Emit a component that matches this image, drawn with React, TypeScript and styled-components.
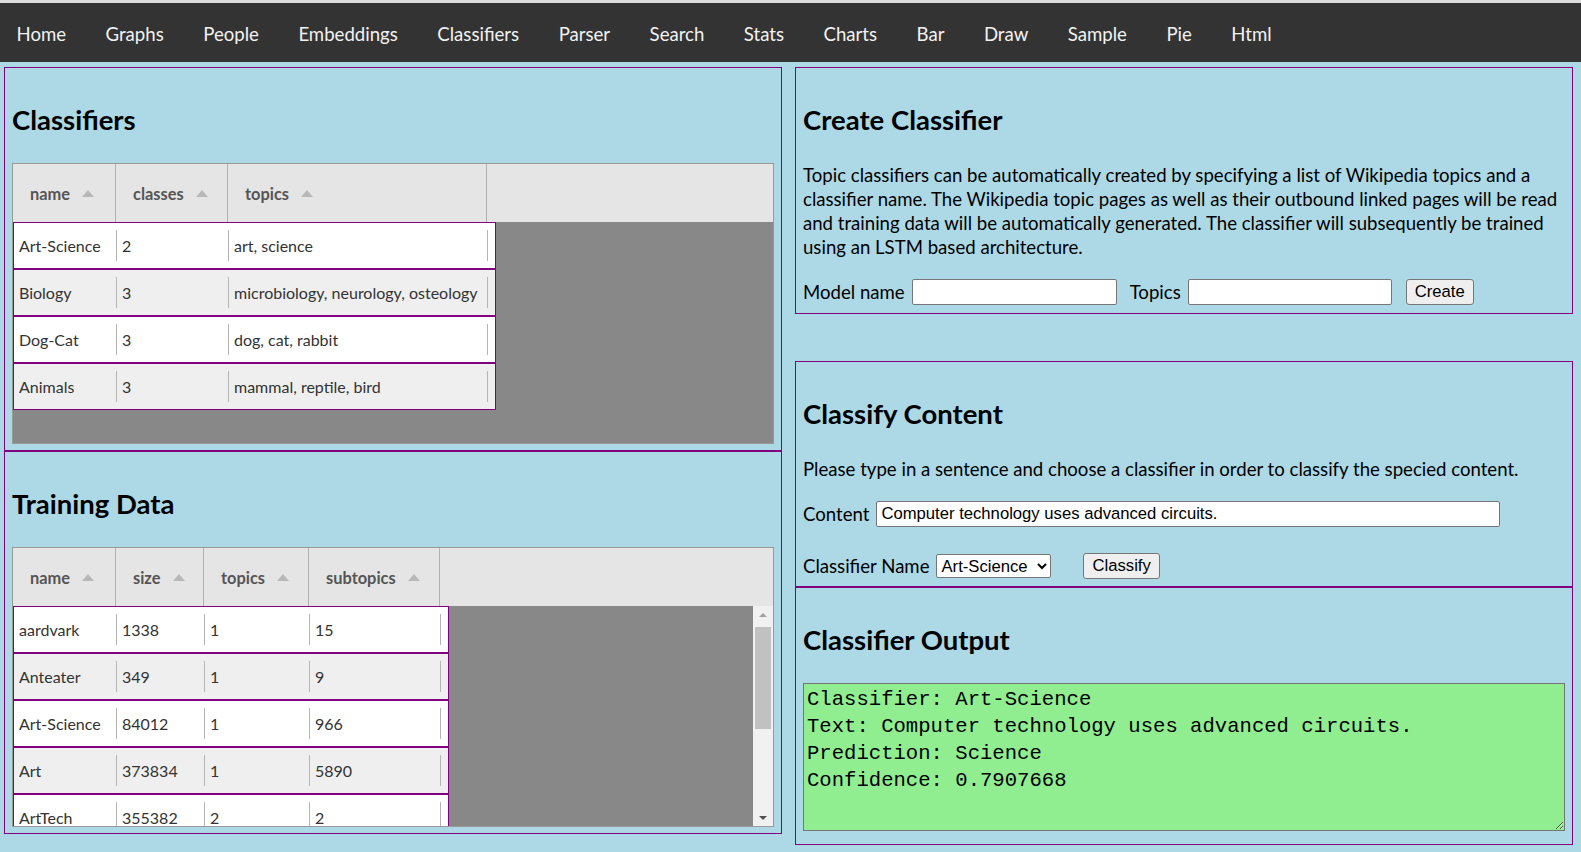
import React from "react";
import styled, { createGlobalStyle } from "styled-components";

const GlobalStyle = createGlobalStyle`
  html, body { margin: 0; padding: 0; }
  body {
    background: #add8e6;
    font-family: Lato, "Open Sans", sans-serif;
    color: #000;
    overflow: hidden;
  }
`;

const NavBar = styled.nav`
  box-sizing: border-box;
  display: flex;
  align-items: center;
  gap: 39.5px;
  height: 62px;
  padding: 2px 0 0 16.5px;
  background: #333;
  border-top: 3px solid #dcdcdc;
`;

const NavLink = styled.a`
  color: #f2f2f2;
  font-size: 18.6px;
  line-height: 24px;
  text-decoration: none;
`;

const Main = styled.main`
  display: grid;
  grid-template-columns: 778px 778px;
  column-gap: 13px;
  padding: 5px 0 0 4px;
  align-items: start;
`;

const Column = styled.div`
  display: flex;
  flex-direction: column;
`;

const Panel = styled.section<{ $pb: number; $mt?: number }>`
  border: 1px solid #800080;
  padding: 10px 7px ${(p) => p.$pb}px;
  margin-top: ${(p) => p.$mt ?? 0}px;
`;

const Title = styled.h2`
  font-size: 27.5px;
  font-weight: 700;
  line-height: 36px;
  margin: 24px 0 25px;
`;

const Text = styled.p`
  font-size: 18.6px;
  line-height: 24px;
  margin: 0 0 20px;
`;

const Grid = styled.div<{ $h: number }>`
  box-sizing: border-box;
  height: ${(p) => p.$h}px;
  border: 1px solid #999;
  background: #888;
  display: flex;
  flex-direction: column;
`;

const HeaderRow = styled.div`
  display: flex;
  height: 58px;
  flex-shrink: 0;
  background: #e5e5e5;
`;

const HeaderCell = styled.div<{ $w: number }>`
  box-sizing: border-box;
  width: ${(p) => p.$w}px;
  border-right: 1px solid #b0b0b0;
  display: flex;
  align-items: center;
  gap: 12px;
  padding-left: 17px;
  font-size: 16.4px;
  font-weight: 700;
  color: #555;
`;

const SortArrow = styled.span`
  width: 0;
  height: 0;
  border-left: 6.5px solid transparent;
  border-right: 6.5px solid transparent;
  border-bottom: 7px solid #b8b8b8;
`;

const GridBody = styled.div`
  flex: 1;
  min-height: 0;
  display: flex;
`;

const RowsViewport = styled.div`
  flex: 1;
  overflow: hidden;
  display: flex;
  flex-direction: column;
  align-items: flex-start;
`;

const DataRow = styled.div<{ $alt: boolean }>`
  box-sizing: border-box;
  display: flex;
  flex-shrink: 0;
  height: 47px;
  padding-right: 7px;
  border: 1px solid #800080;
  background: ${(p) => (p.$alt ? "#efefef" : "#fff")};
`;

const Cell = styled.div<{ $w: number }>`
  box-sizing: border-box;
  width: ${(p) => p.$w}px;
  padding: 7px 0;
  display: flex;
`;

const CellInner = styled.div`
  flex: 1;
  display: flex;
  align-items: center;
  padding-left: 5px;
  border-right: 1px solid #b5b5b5;
  font-size: 16px;
  color: #333;
  white-space: nowrap;
  overflow: hidden;
`;

const ScrollBar = styled.div`
  width: 20px;
  flex-shrink: 0;
  background: #f1f1f1;
  display: flex;
  flex-direction: column;
`;

const ScrollButton = styled.div`
  height: 17px;
  display: flex;
  align-items: center;
  justify-content: center;
  flex-shrink: 0;
`;

const ArrowUp = styled.span`
  width: 0;
  height: 0;
  border-left: 4px solid transparent;
  border-right: 4px solid transparent;
  border-bottom: 4px solid #a3a3a3;
`;

const ArrowDown = styled.span`
  width: 0;
  height: 0;
  border-left: 4px solid transparent;
  border-right: 4px solid transparent;
  border-top: 4px solid #505050;
`;

const ScrollTrack = styled.div`
  flex: 1;
  padding: 4px 2px 0;
`;

const ScrollThumb = styled.div`
  height: 102px;
  background: #c1c1c1;
`;

const FormRow = styled.div<{ $mt?: number }>`
  display: flex;
  align-items: center;
  height: 26px;
  margin-top: ${(p) => p.$mt ?? 0}px;
`;

const Label = styled.label<{ $ml?: number; $mr?: number }>`
  font-size: 18.6px;
  line-height: 24px;
  margin-left: ${(p) => p.$ml ?? 0}px;
  margin-right: ${(p) => p.$mr ?? 7}px;
  white-space: nowrap;
`;

const TextInput = styled.input<{ $w: number }>`
  box-sizing: border-box;
  width: ${(p) => p.$w}px;
  height: 26px;
  padding: 1px 4px;
  border: 1px solid #767676;
  border-radius: 2px;
  background: #fff;
  font-family: "Liberation Sans", Arial, sans-serif;
  font-size: 16.67px;
  color: #000;
`;

const Button = styled.button<{ $ml?: number }>`
  box-sizing: border-box;
  height: 26.5px;
  margin-left: ${(p) => p.$ml ?? 0}px;
  padding: 0 8px;
  border: 1px solid #767676;
  border-radius: 3px;
  background: #efefef;
  font-family: "Liberation Sans", Arial, sans-serif;
  font-size: 16.67px;
  color: #000;
`;

const Select = styled.select`
  box-sizing: border-box;
  width: 115px;
  height: 24px;
  border: 1px solid #767676;
  border-radius: 2px;
  background: #fff;
  font-family: "Liberation Sans", Arial, sans-serif;
  font-size: 16.67px;
  color: #000;
`;

const Output = styled.textarea`
  display: block;
  box-sizing: border-box;
  width: 100%;
  height: 148px;
  padding: 2px 3px 2px;
  border: 1px solid #767676;
  background: #90ee90;
  font-family: "Liberation Mono", "DejaVu Sans Mono", monospace;
  font-size: 20.6px;
  line-height: 27px;
  color: #000;
  resize: both;
`;

const navItems = [
  "Home",
  "Graphs",
  "People",
  "Embeddings",
  "Classifiers",
  "Parser",
  "Search",
  "Stats",
  "Charts",
  "Bar",
  "Draw",
  "Sample",
  "Pie",
  "Html",
];

type Col = { title: string; w: number };

function DataGrid({
  height,
  columns,
  rows,
  scroll,
}: {
  height: number;
  columns: Col[];
  rows: string[][];
  scroll?: boolean;
}) {
  return (
    <Grid $h={height}>
      <HeaderRow>
        {columns.map((c) => (
          <HeaderCell key={c.title} $w={c.w}>
            {c.title}
            <SortArrow />
          </HeaderCell>
        ))}
      </HeaderRow>
      <GridBody>
        <RowsViewport>
          {rows.map((r, i) => (
            <DataRow key={i} $alt={i % 2 === 1}>
              {r.map((v, j) => (
                <Cell key={j} $w={columns[j].w}>
                  <CellInner>{v}</CellInner>
                </Cell>
              ))}
            </DataRow>
          ))}
        </RowsViewport>
        {scroll && (
          <ScrollBar>
            <ScrollButton>
              <ArrowUp />
            </ScrollButton>
            <ScrollTrack>
              <ScrollThumb />
            </ScrollTrack>
            <ScrollButton>
              <ArrowDown />
            </ScrollButton>
          </ScrollBar>
        )}
      </GridBody>
    </Grid>
  );
}

const classifierCols: Col[] = [
  { title: "name", w: 103 },
  { title: "classes", w: 112 },
  { title: "topics", w: 259 },
];

const classifierRows = [
  ["Art-Science", "2", "art, science"],
  ["Biology", "3", "microbiology, neurology, osteology"],
  ["Dog-Cat", "3", "dog, cat, rabbit"],
  ["Animals", "3", "mammal, reptile, bird"],
];

const trainingCols: Col[] = [
  { title: "name", w: 103 },
  { title: "size", w: 88 },
  { title: "topics", w: 105 },
  { title: "subtopics", w: 131 },
];

const trainingRows = [
  ["aardvark", "1338", "1", "15"],
  ["Anteater", "349", "1", "9"],
  ["Art-Science", "84012", "1", "966"],
  ["Art", "373834", "1", "5890"],
  ["ArtTech", "355382", "2", "2"],
];

const outputText = `Classifier: Art-Science
Text: Computer technology uses advanced circuits.
Prediction: Science
Confidence: 0.7907668`;

export default function App() {
  return (
    <>
      <GlobalStyle />
      <NavBar>
        {navItems.map((n) => (
          <NavLink key={n} href="#">
            {n}
          </NavLink>
        ))}
      </NavBar>
      <Main>
        <Column>
          <Panel $pb={6}>
            <Title>Classifiers</Title>
            <DataGrid height={281} columns={classifierCols} rows={classifierRows} />
          </Panel>
          <Panel $pb={6}>
            <Title>Training Data</Title>
            <DataGrid height={280} columns={trainingCols} rows={trainingRows} scroll />
          </Panel>
        </Column>
        <Column>
          <Panel $pb={8}>
            <Title>Create Classifier</Title>
            <Text>
              Topic classifiers can be automatically created by specifying a list of Wikipedia topics
              and a classifier name. The Wikipedia topic pages as well as their outbound linked pages
              will be read and training data will be automatically generated. The classifier will
              subsequently be trained using an LSTM based architecture.
            </Text>
            <FormRow>
              <Label>Model name</Label>
              <TextInput $w={205} />
              <Label $ml={13}>Topics</Label>
              <TextInput $w={204} />
              <Button $ml={14}>Create</Button>
            </FormRow>
          </Panel>
          <Panel $pb={7} $mt={47}>
            <Title>Classify Content</Title>
            <Text>
              Please type in a sentence and choose a classifier in order to classify the specied
              content.
            </Text>
            <FormRow>
              <Label $mr={7}>Content</Label>
              <TextInput $w={624} defaultValue="Computer technology uses advanced circuits." />
            </FormRow>
            <FormRow $mt={26}>
              <Label $mr={7}>Classifier Name</Label>
              <Select defaultValue="Art-Science">
                <option>Art-Science</option>
                <option>Biology</option>
                <option>Dog-Cat</option>
                <option>Animals</option>
              </Select>
              <Button $ml={32}>Classify</Button>
            </FormRow>
          </Panel>
          <Panel $pb={13}>
            <Title>Classifier Output</Title>
            <Output defaultValue={outputText} spellCheck={false} />
          </Panel>
        </Column>
      </Main>
    </>
  );
}
